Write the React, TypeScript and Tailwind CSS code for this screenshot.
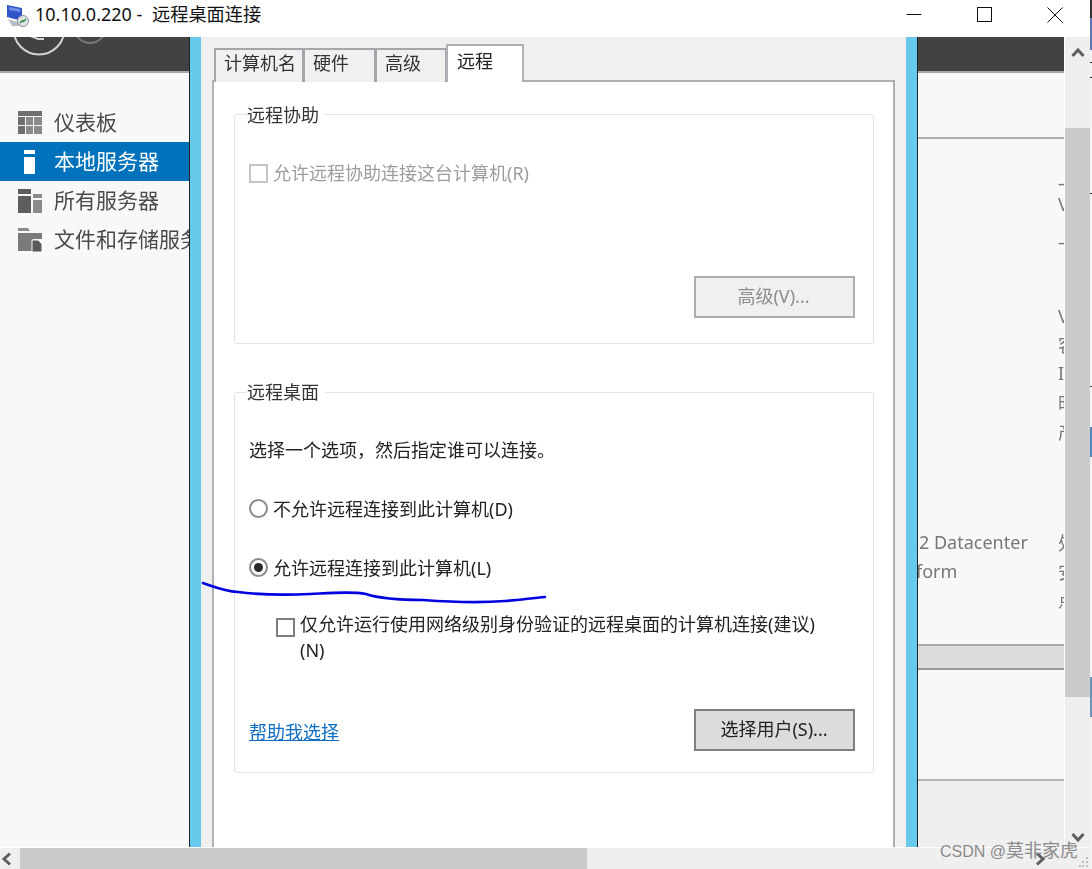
const navItems = [
  { label: '仪表板', icon: 'dashboard' },
  { label: '本地服务器', icon: 'local', active: true },
  { label: '所有服务器', icon: 'all' },
  { label: '文件和存储服务器', icon: 'files' },
];

const clippedText = [
  { text: '—', cls: 'mt-[34px]' },
  { text: 'V', cls: 'mt-[1px]' },
  { text: '—', cls: 'mt-[18px]' },
  { text: 'V', cls: 'mt-[54px]' },
  { text: '客', cls: 'mt-[9px]' },
  { text: 'I', cls: 'mt-[8px]' },
  { text: '时', cls: 'mt-[10px]' },
  { text: '产', cls: 'mt-[9px]' },
  { text: '处', cls: 'mt-[91px]' },
  { text: '安', cls: 'mt-[9px]' },
  { text: '点', cls: 'mt-[8px]' },
];

function NavIcon({ name }: { name: string }) {
  if (name === 'dashboard') {
    return (
      <svg className="shrink-0" width="24" height="23" viewBox="0 0 24 23" fill="#6f6f6f">
        <rect x="0" y="0" width="24" height="5" />
        <rect x="0" y="6" width="7" height="8" />
        <rect x="8" y="6" width="7" height="8" fill="#8a8a8a" />
        <rect x="16" y="6" width="8" height="8" fill="#8a8a8a" />
        <rect x="0" y="15" width="7" height="8" />
        <rect x="8" y="15" width="7" height="8" fill="#8a8a8a" />
        <rect x="16" y="15" width="8" height="8" fill="#8a8a8a" />
      </svg>
    );
  }
  if (name === 'local') {
    return (
      <svg className="shrink-0" width="24" height="24" viewBox="0 0 24 24" fill="#ffffff">
        <rect x="6" y="0" width="11" height="4" />
        <rect x="6" y="7" width="11" height="17" />
      </svg>
    );
  }
  if (name === 'all') {
    return (
      <svg className="shrink-0" width="24" height="24" viewBox="0 0 24 24">
        <rect x="0" y="0" width="13" height="5" fill="#5e5e5e" />
        <rect x="0" y="7" width="13" height="17" fill="#5e5e5e" />
        <rect x="15" y="5" width="9" height="4" fill="#8a8a8a" />
        <rect x="15" y="11" width="9" height="13" fill="#8a8a8a" />
      </svg>
    );
  }
  return (
    <svg className="shrink-0" width="24" height="24" viewBox="0 0 24 24">
      <path d="M0 0h10l2 3H0z" fill="#8a8a8a" />
      <path d="M0 5h24v6h-9v12H0z" fill="#7a7a7a" />
      <path d="M14 12h6l4 4v8H14z" fill="#5a5a5a" stroke="#f8f8f8" strokeWidth="1" />
    </svg>
  );
}

function Tab({ label, cls, active }: { label: string; cls: string; active?: boolean }) {
  if (active) {
    return (
      <div className={`h-[38px] border-2 border-b-0 border-[#adb0b5] bg-white pl-[9px] text-[18px] leading-[30px] text-[#222] ${cls}`}>
        {label}
      </div>
    );
  }
  return (
    <div className={`h-[34px] border-2 border-b-0 border-[#a3a6aa] bg-[#f0f0f0] pl-[8px] text-[18px] leading-[27px] text-[#333] ${cls}`}>
      {label}
    </div>
  );
}

function Radio({ checked }: { checked?: boolean }) {
  return (
    <div className="mt-[2px] flex h-[19px] w-[19px] shrink-0 items-center justify-center rounded-full border-2 border-[#8c8c8c] bg-white">
      {checked && <div className="h-[9px] w-[9px] rounded-full bg-[#2a2a2a]" />}
    </div>
  );
}

function Chevron({ points }: { points: string }) {
  return (
    <svg width="14" height="14" viewBox="0 0 14 14" fill="none" stroke="#5f5f5f" strokeWidth="3">
      <polyline points={points} />
    </svg>
  );
}

export default function App() {
  return (
    <div className="relative flex h-[869px] w-[1092px] overflow-hidden bg-white font-['Noto_Sans','Noto_Sans_CJK_SC',sans-serif]">
      <div className="flex w-[1090px] flex-col">
        {/* title bar */}
        <div className="flex h-[37px] shrink-0 items-center bg-white">
          <svg className="ml-[6px] mr-[6px] mb-[6px]" width="23" height="23" viewBox="0 0 23 23">
            <path d="M1 1l15 3v13L1 13z" fill="#2f55c8" />
            <path d="M3 3l11 2v3L3 6z" fill="#6f8fe6" />
            <path d="M2 15l13 4v3H6z" fill="#b8bcc4" />
            <circle cx="17" cy="17" r="5.5" fill="#dfe3e8" stroke="#8b9098" />
            <path d="M14 19l3-3M17 18l3-3" stroke="#2f8f3f" strokeWidth="1.5" />
          </svg>
          <span className="mb-[10px] text-[18px] leading-[24px] text-[#111]">
            10.10.0.220 - <span className="ml-[5px] text-[18.2px]">远程桌面连接</span>
          </span>
          <div className="ml-auto mr-[27px] mb-[8px] flex items-center gap-[54px]">
            <svg width="16" height="15" viewBox="0 0 16 15" className="mr-[1px]" fill="none" stroke="#111">
              <path d="M0.5 7.5h15" />
            </svg>
            <svg width="16" height="16" viewBox="0 0 16 16" fill="none" stroke="#111">
              <rect x="0.5" y="0.5" width="14" height="14" />
            </svg>
            <svg width="16" height="16" viewBox="0 0 16 16" fill="none" stroke="#111">
              <path d="M0.5 0.5l15 15M15.5 0.5l-15 15" />
            </svg>
          </div>
        </div>

        <div className="flex h-[810px] shrink-0">
          {/* sidebar */}
          <div className="flex w-[189px] shrink-0 flex-col overflow-hidden bg-[#f8f8f8]">
            <div className="h-[36px] shrink-0 border-b-2 border-[#a8a8a8] bg-[#424242]">
              <svg width="189" height="34" viewBox="0 0 189 34" fill="none">
                <circle cx="39" cy="-8" r="25.5" stroke="#d4d4d4" strokeWidth="2" />
                <circle cx="90" cy="-10" r="16" stroke="#767676" strokeWidth="2" />
                <path d="M28 -2l10 4 6 0" stroke="#d4d4d4" strokeWidth="2" />
              </svg>
            </div>
            <div className="flex flex-col pt-[30px]">
              {navItems.map((item) => (
                <div
                  key={item.label}
                  className={`flex h-[39px] items-center gap-[12px] pl-[18px] whitespace-nowrap ${item.active ? 'bg-[#0072bc] text-white' : 'text-[#4a4a4a]'}`}
                >
                  <NavIcon name={item.icon} />
                  <span className="text-[21px] leading-[39px] blur-[0.3px]">{item.label}</span>
                </div>
              ))}
            </div>
          </div>

          <div className="w-[1px] shrink-0 bg-[#222]" />
          <div className="w-[11px] shrink-0 bg-[#67c9ec]" />

          {/* dialog */}
          <div className="flex w-[705px] shrink-0 flex-col bg-[#f0f0f0] pl-[11px] pr-[11px] pt-[7px] blur-[0.3px]">
            <div className="relative z-10 -mb-[2px] flex items-end pl-[2px]">
              <Tab label="计算机名" cls="w-[90px]" />
              <Tab label="硬件" cls="w-[73px] -ml-[1px]" />
              <Tab label="高级" cls="w-[72px] -ml-[1px]" />
              <Tab label="远程" cls="w-[78px] -ml-[1px]" active />
            </div>
            <div className="flex-1 border-x-2 border-t-2 border-[#adb0b5] bg-white pl-[20px] pt-[32px]">
              <div className="relative flex h-[230px] w-[640px] flex-col rounded-[3px] border border-[#dce4ec] pl-[14px]">
                <div className="absolute -top-[12px] left-[12px] bg-white pr-[6px] text-[18px] leading-[24px] text-[#333]">远程协助</div>
                <div className="mt-[49px] flex h-[20px] gap-[5px]">
                  <div className="h-[19px] w-[19px] shrink-0 border-2 border-[#c4c4c4] bg-white" />
                  <span className="-mt-[1px] text-[18px] leading-[20px] text-[#9c9c9c]">允许远程协助连接这台计算机(R)</span>
                </div>
                <button className="mr-[18px] mt-[92px] h-[42px] w-[161px] self-end border-2 border-[#adadad] bg-[#f0f0f0] pb-[1px] pr-[2px] text-[18px] text-[#8c8c8c]">
                  高级(V)...
                </button>
              </div>

              <div className="relative mt-[48px] flex h-[381px] w-[640px] flex-col rounded-[3px] border border-[#dce4ec] pl-[14px]">
                <div className="absolute -top-[13px] left-[12px] bg-white pr-[6px] text-[18px] leading-[24px] text-[#333]">远程桌面</div>
                <div className="mt-[45px] h-[24px] text-[18px] leading-[24px] text-[#222]">选择一个选项，然后指定谁可以连接。</div>
                <div className="mt-[35px] flex h-[24px] gap-[5px]">
                  <Radio />
                  <span className="text-[18px] leading-[24px] text-[#222]">不允许远程连接到此计算机(D)</span>
                </div>
                <div className="mt-[35px] flex h-[24px] gap-[5px]">
                  <Radio checked />
                  <span className="text-[18px] leading-[24px] text-[#222]">允许远程连接到此计算机(L)</span>
                </div>
                <div className="ml-[27px] mt-[31px] flex gap-[5px]">
                  <div className="mt-[7px] h-[19px] w-[19px] shrink-0 border-2 border-[#7f7f7f] bg-white" />
                  <div className="w-[540px] text-[18px] leading-[26px] text-[#222]">
                    仅允许运行使用网络级别身份验证的远程桌面的计算机连接(建议) (N)
                  </div>
                </div>
                <div className="mt-[46px] flex h-[42px] items-center justify-between pr-[18px]">
                  <a className="pt-[5px] text-[18px] text-[#0f6cc4] underline">帮助我选择</a>
                  <button className="h-[42px] w-[161px] border-2 border-[#7e7e7e] bg-[#dcdcdc] pb-[2px] pr-[1px] text-[18px] text-[#222]">
                    选择用户(S)...
                  </button>
                </div>
              </div>
            </div>
          </div>

          <div className="w-[11px] shrink-0 bg-[#67c9ec]" />
          <div className="w-[1px] shrink-0 bg-[#222]" />

          {/* server detail pane, cut off by the dialog */}
          <div className="flex w-[146px] shrink-0 flex-col overflow-hidden bg-[#f8f8f8] text-[18px] text-[#777]">
            <div className="h-[36px] shrink-0 border-b-2 border-[#a8a8a8] bg-[#424242]" />
            <div className="h-[66px] shrink-0 border-b-2 border-[#b0b0b0]" />
            <div className="flex h-[505px] shrink-0 blur-[0.3px]">
              <div className="w-[140px] shrink-0 whitespace-nowrap pt-[389px] leading-[29px]">
                <div className="pl-[1px]">2 Datacenter</div>
                <div className="-ml-[2px]">form</div>
              </div>
              <div className="flex w-[6px] shrink-0 flex-col overflow-hidden">
                {clippedText.map((row, i) => (
                  <div key={i} className={`h-[20px] shrink-0 leading-[20px] ${row.cls}`}>
                    {row.text}
                  </div>
                ))}
              </div>
            </div>
            <div className="h-[26px] shrink-0 border-y-2 border-t-[#acacac] border-b-[#999] bg-[#dcdcdc]" />
            <div className="h-[111px] shrink-0 border-b-2 border-[#b4b4b4]" />
            <div className="flex-1 bg-[#efefef]" />
          </div>

          {/* vertical scrollbar */}
          <div className="flex w-[26px] shrink-0 flex-col border-l border-white bg-[#efefef]">
            <div className="flex h-[91px] shrink-0 justify-center pt-[9px]">
              <Chevron points="1.5,10 7,4 12.5,10" />
            </div>
            <div className="h-[569px] shrink-0 bg-[#cbcbcb]" />
            <div className="flex flex-1 items-end justify-center pb-[3px]">
              <Chevron points="1.5,4 7,10 12.5,4" />
            </div>
          </div>
        </div>

        {/* horizontal scrollbar */}
        <div className="flex h-[22px] shrink-0 border-t border-white bg-[#efefef]">
          <div className="flex w-[20px] shrink-0 items-center">
            <Chevron points="10,1.5 4,7 10,12.5" />
          </div>
          <div className="w-[567px] shrink-0 bg-[#cbcbcb]" />
          <div className="flex flex-1 items-center justify-end pr-[32px]">
            <Chevron points="4,1.5 10,7 4,12.5" />
          </div>
          <svg className="mr-[1px] mt-[9px]" width="10" height="10" viewBox="0 0 10 10" fill="#bdbdbd">
            <rect x="7" y="0" width="2" height="2" />
            <rect x="3" y="4" width="2" height="2" />
            <rect x="7" y="4" width="2" height="2" />
            <rect x="0" y="8" width="2" height="2" />
            <rect x="3" y="8" width="2" height="2" />
            <rect x="7" y="8" width="2" height="2" />
          </svg>
        </div>
      </div>

      {/* sliver of the window behind */}
      <div className="flex w-[2px] shrink-0 flex-col bg-[#f4f4f4]">
        <div className="h-[18px] bg-[#333]" />
        <div className="h-[32px] bg-[#5a78b5]" />
        <div className="h-[12px]" />
        <div className="h-[1px] bg-[#222]" />
        <div className="h-[14px]" />
        <div className="h-[1px] bg-[#222]" />
        <div className="h-[115px]" />
        <div className="h-[1px] bg-[#222]" />
        <div className="h-[192px]" />
        <div className="h-[1px] bg-[#444]" />
        <div className="h-[40px]" />
        <div className="h-[30px] bg-[#4f86b5]" />
        <div className="h-[220px]" />
        <div className="h-[40px] bg-[#6f93b8]" />
        <div className="flex-1" />
      </div>

      {/* hand-drawn underline on the screenshot */}
      <svg className="pointer-events-none absolute left-0 top-0" width="1092" height="869" fill="none">
        <path
          d="M203 583C215 587 224 591 238 592C262 595 290 595 310 594C330 593 352 591 366 594C378 598 392 600 423 600C450 602 480 603 505 601C520 600 532 598 545 597"
          stroke="#0000e0"
          strokeWidth="2.6"
          strokeLinecap="round"
        />
      </svg>

      {/* watermark */}
      <div className="pointer-events-none absolute left-[940px] top-[839px] font-['Liberation_Sans','Noto_Sans_CJK_SC',sans-serif] text-[16px] leading-[24px] text-[#8a8a8a]">
        CSDN @<span className="text-[18px]">莫非家虎</span>
      </div>
    </div>
  );
}
